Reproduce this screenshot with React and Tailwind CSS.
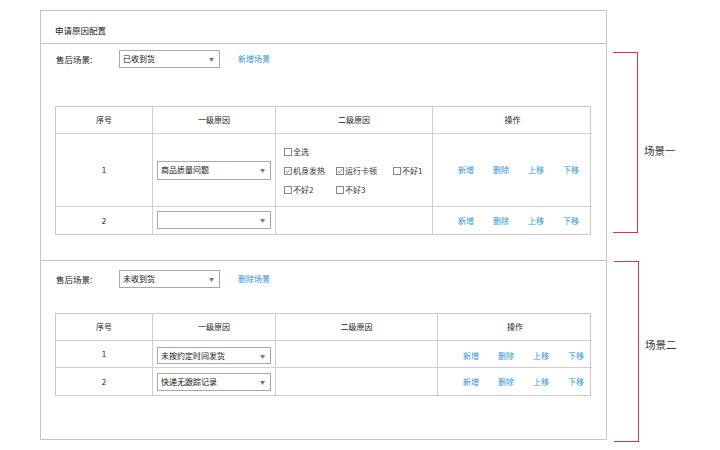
import React from "react";

const font = { fontFamily: '"Noto Sans CJK SC", "Noto Sans", sans-serif' };

const Select = ({ value, className }) => (
  <div
    className={`flex items-center justify-between border border-[#a9a9a9] bg-white pl-[3px] pr-[5px] text-[8px] text-[#111] ${className}`}
  >
    <span>{value}</span>
    <span className="text-[5px] text-[#777]">▼</span>
  </div>
);

const Check = ({ checked, label, className }) => (
  <div className={`flex items-center gap-[1px] text-[8px] text-[#333] ${className || ""}`}>
    <span className="flex h-[8px] w-[8px] items-center justify-center border border-[#888]">
      {checked && (
        <svg width="6" height="6" viewBox="0 0 6 6">
          <path d="M0.8 3 L2.4 4.6 L5.3 1.2" fill="none" stroke="#666" strokeWidth="0.8" />
        </svg>
      )}
    </span>
    <span>{label}</span>
  </div>
);

const Actions = () => (
  <div className="flex items-center gap-[19px] pl-[25px] text-[8px] text-[#2f95dc]">
    <span>新增</span>
    <span>删除</span>
    <span>上移</span>
    <span>下移</span>
  </div>
);

const SceneRow = ({ scene, link }) => (
  <div className="flex items-center pl-[15px]">
    <span className="w-[63px] text-[8.5px] text-[#222]">售后场景:</span>
    <Select value={scene} className="h-[18px] w-[101px]" />
    <span className="ml-[18px] text-[8px] text-[#2f95dc]">{link}</span>
  </div>
);

const cell = "flex items-center border-[#cfcfcf]";

export default function App() {
  return (
    <div className="flex h-[450px] w-[720px] bg-white pl-[40px] pt-[10px]" style={font}>
      <div className="flex h-[430px] w-[567px] flex-col border border-[#c4c4c4]">
        <div className="h-[33px] border-b border-[#c4c4c4] pl-[14px] pt-[13px] text-[8.5px] leading-[12px] text-[#222]">
          申请原因配置
        </div>

        {/* 场景一 */}
        <div className="h-[217px] border-b border-[#c4c4c4] pt-[6px]">
          <SceneRow scene="已收到货" link="新增场景" />
          <div className="ml-[14px] mt-[38px] grid w-[536px] grid-cols-[97px_123px_157px_159px] grid-rows-[27px_73px_27px] border border-[#c8c8c8] text-[8px] text-[#222]">
            <div className={`${cell} justify-center border-r border-b`}>序号</div>
            <div className={`${cell} justify-center border-r border-b`}>一级原因</div>
            <div className={`${cell} justify-center border-r border-b`}>二级原因</div>
            <div className={`${cell} justify-center border-b`}>操作</div>

            <div className={`${cell} justify-center border-r border-b`}>1</div>
            <div className={`${cell} border-r border-b pl-[4px]`}>
              <Select value="商品质量问题" className="h-[19px] w-[114px]" />
            </div>
            <div className={`${cell} border-r border-b pl-[8px] pt-[2px]`}>
              <div className="flex flex-col gap-[7px]">
                <Check label="全选" />
                <div className="flex">
                  <Check checked label="机身发热" className="w-[52px]" />
                  <Check checked label="运行卡顿" className="w-[57px]" />
                  <Check label="不好1" />
                </div>
                <div className="flex">
                  <Check label="不好2" className="w-[52px]" />
                  <Check label="不好3" />
                </div>
              </div>
            </div>
            <div className={`${cell} border-b`}>
              <Actions />
            </div>

            <div className={`${cell} justify-center border-r`}>2</div>
            <div className={`${cell} border-r pl-[4px] pb-[2px]`}>
              <Select value="" className="h-[18px] w-[114px]" />
            </div>
            <div className={`${cell} border-r`}></div>
            <div className={cell}>
              <Actions />
            </div>
          </div>
        </div>

        {/* 场景二 */}
        <div className="flex-1 pt-[9px]">
          <SceneRow scene="未收到货" link="删除场景" />
          <div className="ml-[14px] mt-[25px] grid w-[536px] grid-cols-[97px_123px_162px_154px] grid-rows-[27px_27px_27px] border border-[#c8c8c8] text-[8px] text-[#222]">
            <div className={`${cell} justify-center border-r border-b`}>序号</div>
            <div className={`${cell} justify-center border-r border-b`}>一级原因</div>
            <div className={`${cell} justify-center border-r border-b`}>二级原因</div>
            <div className={`${cell} justify-center border-b`}>操作</div>

            <div className={`${cell} justify-center border-r border-b`}>1</div>
            <div className={`${cell} border-r border-b pl-[4px] pt-[3px]`}>
              <Select value="未按约定时间发货" className="h-[17px] w-[114px]" />
            </div>
            <div className={`${cell} border-r border-b`}></div>
            <div className={`${cell} border-b pt-[3px]`}>
              <Actions />
            </div>

            <div className={`${cell} justify-center border-r`}>2</div>
            <div className={`${cell} border-r pl-[4px]`}>
              <Select value="快递无跟踪记录" className="h-[18px] w-[114px]" />
            </div>
            <div className={`${cell} border-r`}></div>
            <div className={cell}>
              <Actions />
            </div>
          </div>
        </div>
      </div>

      {/* brackets */}
      <div className="ml-[6px] flex flex-col">
        <div className="mt-[42px] flex">
          <div className="h-[181px] w-[25px] border-y-[1.5px] border-r-[1.5px] border-[#e0323c]"></div>
          <span className="ml-[6px] mt-[91px] text-[10.5px] text-[#333]">场景一</span>
        </div>
        <div className="mt-[28px] flex">
          <div className="ml-[1px] h-[181px] w-[25px] border-y-[1.5px] border-r-[1.5px] border-[#e0323c]"></div>
          <span className="ml-[6px] mt-[76px] text-[10.5px] text-[#333]">场景二</span>
        </div>
      </div>
    </div>
  );
}
